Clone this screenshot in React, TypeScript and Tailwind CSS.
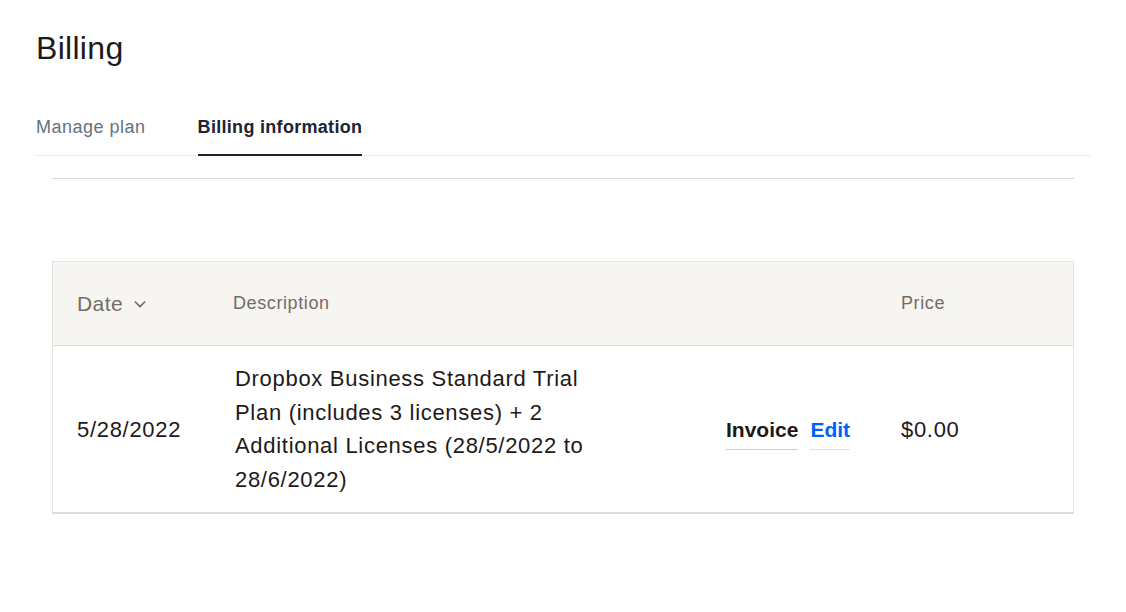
export default function App() {
  return (
    <div className="min-h-screen bg-white px-9 pt-[29px] font-['Liberation_Sans',Arial,sans-serif]">
      {/* Header */}
      <h1 className="text-[32px] leading-[38px] text-[#1e1919] tracking-[0.3px]">Billing</h1>

      {/* Tabs */}
      <div className="mt-[48px] flex gap-[52px] border-b border-[#ebebeb]">
        <button className="pb-[15px] text-[18px] leading-[24px] tracking-[0.5px] text-[#637282] border-b-2 border-transparent -mb-px">
          Manage plan
        </button>
        <button className="pb-[15px] text-[18px] leading-[24px] tracking-[0.3px] font-bold text-[#1e2235] border-b-2 border-[#1e2235] -mb-px">
          Billing information
        </button>
      </div>

      <div className="px-4">
        <div className="mt-[22px] border-t border-[#d6d6d6]" />

        {/* Invoices table */}
        <div className="mt-[82px] border border-[#e6e4e0] border-b-2 border-b-[#dcdcdc]">
          <div className="flex h-[84px] items-center bg-[#f7f5f2] border-b border-[#dedbd6] text-[#736c64]">
            <div className="w-[180px] pl-[24px] flex items-center gap-[9px] text-[21px] tracking-[0.4px]">
              Date
              <svg className="w-[16px] h-[16px]" viewBox="0 0 24 24" fill="none" stroke="currentColor" strokeWidth="2.5" strokeLinecap="round" strokeLinejoin="round">
                <path d="M5 9l7 7 7-7" />
              </svg>
            </div>
            <div className="w-[493px] text-[18px] tracking-[0.6px]">Description</div>
            <div className="w-[175px]" />
            <div className="text-[18px] tracking-[0.6px]">Price</div>
          </div>

          <div className="flex items-center py-[16px] text-[#1e1919] text-[22px] tracking-[0.7px]">
            <div className="w-[182px] pl-[24px]">5/28/2022</div>
            <div className="w-[491px] leading-[33.5px]">
              <p className="max-w-[352px]">
                Dropbox Business Standard Trial Plan (includes 3 licenses) + 2 Additional Licenses (28/5/2022 to 28/6/2022)
              </p>
            </div>
            <div className="w-[175px] mt-[6px] flex items-center gap-[12px] text-[21px] tracking-normal">
              <a className="font-bold text-[#1e1919] pb-[4px] border-b border-[#cfcfcf]">Invoice</a>
              <a className="font-bold text-[#0061fe] pb-[4px] border-b border-[#dedede]">Edit</a>
            </div>
            <div>$0.00</div>
          </div>
        </div>
      </div>
    </div>
  );
}
